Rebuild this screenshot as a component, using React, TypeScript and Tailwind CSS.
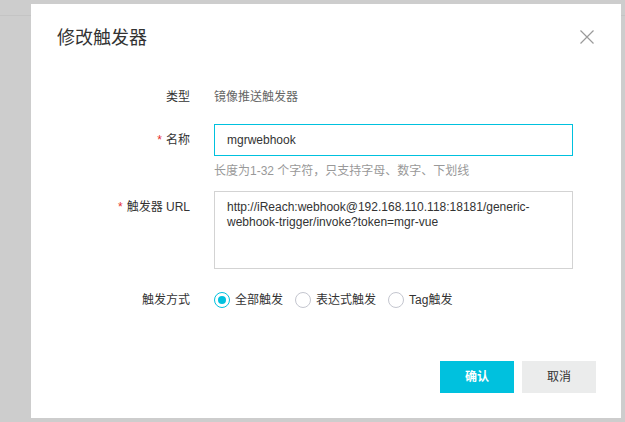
import React from "react";

const font = { fontFamily: '"Liberation Sans", "Noto Sans CJK SC", sans-serif' };

function Radio({ checked, label }: { checked?: boolean; label: string }) {
  return (
    <label className="flex items-center">
      <span
        className={
          checked
            ? "flex h-[16px] w-[16px] items-center justify-center rounded-full border border-[#00c1de] bg-white"
            : "flex h-[16px] w-[16px] items-center justify-center rounded-full border border-[#c4c6cf] bg-white"
        }
      >
        {checked ? <span className="h-[8px] w-[8px] rounded-full bg-[#00c1de]" /> : null}
      </span>
      <span className="ml-[5px] text-[12px] leading-[18px] text-[#333]">{label}</span>
    </label>
  );
}

function Req() {
  return <span className="mr-[4px] text-[#e62e2e]">*</span>;
}

export default function App() {
  return (
    <div className="relative h-[422px] w-[625px] overflow-hidden bg-[#cdcdcd]" style={font}>
      <div className="h-[16px] border-b border-[#c4c4c4]" />
      <div className="absolute left-[31px] top-[4px] flex h-[414px] w-[590px] flex-col bg-white">
        {/* header */}
        <div className="flex items-start justify-between pl-[26px] pr-[27px] pt-[22px]">
          <div className="text-[18px] leading-[24px] text-[#333]">修改触发器</div>
          <svg width="14" height="14" viewBox="0 0 14 14" className="mt-[4px]">
            <path d="M0.5 0.5 L13.5 13.5 M13.5 0.5 L0.5 13.5" stroke="#9a9a9a" strokeWidth="1.2" fill="none" />
          </svg>
        </div>

        {/* form */}
        <div className="mt-[38px] grid grid-cols-[159px_359px] gap-x-[24px] text-[12px]">
          <div className="text-right leading-[18px] text-[#333]">类型</div>
          <div className="leading-[18px] text-[#666]">镜像推送触发器</div>

          <div className="mt-[18px] flex h-[32px] items-center justify-end leading-[18px] text-[#333]">
            <Req />
            名称
          </div>
          <div className="mt-[18px]">
            <div className="flex h-[32px] items-center border border-[#00c1de] pl-[12px] text-[#333]">mgrwebhook</div>
            <div className="mt-[6px] leading-[18px] text-[#999]">长度为1-32 个字符，只支持字母、数字、下划线</div>
          </div>

          <div className="mt-[11px] flex justify-end pt-[7px] leading-[18px] text-[#333]">
            <Req />
            触发器 URL
          </div>
          <div className="mt-[11px] h-[78px] border border-[#d3d3d3] px-[12px] pt-[8px] leading-[15px] text-[#333]">
            <div>http://iReach:webhook@192.168.110.118:18181/generic-</div>
            <div>webhook-trigger/invoke?token=mgr-vue</div>
          </div>

          <div className="mt-[22px] text-right leading-[18px] text-[#333]">触发方式</div>
          <div className="mt-[22px] flex items-center gap-[12px]">
            <Radio checked label="全部触发" />
            <Radio label="表达式触发" />
            <Radio label="Tag触发" />
          </div>
        </div>

        {/* footer */}
        <div className="mt-[52px] flex justify-end gap-[8px] pr-[25px]">
          <button className="flex h-[32px] w-[74px] items-center justify-center bg-[#00c1de] text-[12px] font-bold text-white">
            确认
          </button>
          <button className="flex h-[32px] w-[74px] items-center justify-center bg-[#ebecec] text-[12px] text-[#333]">
            取消
          </button>
        </div>
      </div>
    </div>
  );
}
